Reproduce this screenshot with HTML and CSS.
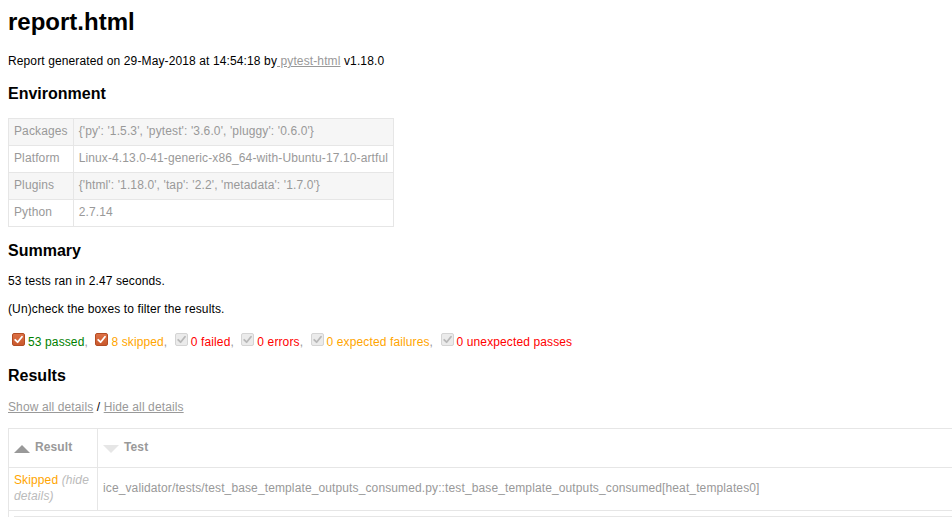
FILE: index.html
```html
<!DOCTYPE html>
<html>
<head>
<meta charset="utf-8">
<title>Test Report</title>
<link rel="stylesheet" href="styles.css">
</head>
<body>
<h1>report.html</h1>
<p>Report generated on 29-May-2018 at 14:54:18 by<a href="#"> pytest-html</a> v1.18.0</p>
<h2>Environment</h2>
<table id="environment">
  <tr><td>Packages</td><td>{'py': '1.5.3', 'pytest': '3.6.0', 'pluggy': '0.6.0'}</td></tr>
  <tr><td>Platform</td><td>Linux-4.13.0-41-generic-x86_64-with-Ubuntu-17.10-artful</td></tr>
  <tr><td>Plugins</td><td>{'html': '1.18.0', 'tap': '2.2', 'metadata': '1.7.0'}</td></tr>
  <tr><td>Python</td><td>2.7.14</td></tr>
</table>
<h2>Summary</h2>
<p>53 tests ran in 2.47 seconds. </p>
<p class="filter">(Un)check the boxes to filter the results.</p>
<div class="filters"><span class="cb on"><svg viewBox="0 0 13 13" width="13" height="13"><polyline points="3.2,6.8 5.6,9.2 10,3.8"/></svg></span><span class="passed">53 passed</span>, <span class="cb on"><svg viewBox="0 0 13 13" width="13" height="13"><polyline points="3.2,6.8 5.6,9.2 10,3.8"/></svg></span><span class="skipped">8 skipped</span>, <span class="cb off"><svg viewBox="0 0 13 13" width="13" height="13"><polyline points="3.2,6.8 5.6,9.2 10,3.8"/></svg></span><span class="failed">0 failed</span>, <span class="cb off"><svg viewBox="0 0 13 13" width="13" height="13"><polyline points="3.2,6.8 5.6,9.2 10,3.8"/></svg></span><span class="error">0 errors</span>, <span class="cb off"><svg viewBox="0 0 13 13" width="13" height="13"><polyline points="3.2,6.8 5.6,9.2 10,3.8"/></svg></span><span class="xfailed">0 expected failures</span>, <span class="cb off"><svg viewBox="0 0 13 13" width="13" height="13"><polyline points="3.2,6.8 5.6,9.2 10,3.8"/></svg></span><span class="xpassed">0 unexpected passes</span></div>
<h2>Results</h2>
<p class="filter details-links"><a href="#">Show all details</a> / <a href="#">Hide all details</a></p>
<table id="results-table">
  <thead>
    <tr>
      <th class="col-result asc active"><div class="sort-icon"></div>Result</th>
      <th class="col-name inactive"><div class="sort-icon"></div>Test</th>
      <th class="col-duration inactive"><div class="sort-icon"></div>Duration</th>
      <th class="col-links">Links</th>
    </tr>
  </thead>
  <tbody class="skipped">
    <tr>
      <td class="col-result">Skipped<span class="collapser"> (hide details)</span></td>
      <td class="col-name">ice_validator/tests/test_base_template_outputs_consumed.py::test_base_template_outputs_consumed[heat_templates0]</td>
      <td class="col-duration">0.00</td>
      <td class="col-links"></td>
    </tr>
    <tr>
      <td class="extra" colspan="4"><div class="log">('ice_validator/tests/test_base_template_outputs_consumed.py', 45, 'Skipped: No base template found')</div></td>
    </tr>
  </tbody>
</table>
</body>
</html>
```

FILE: styles.css
```css
html {
  overflow: hidden;
}

body {
  margin: 0;
  padding: 0 8px;
  font-family: "Liberation Sans", Arial, Helvetica, sans-serif;
  font-size: 12px;
  line-height: 1.33;
  letter-spacing: 0.12px;
  color: #999;
}

h1 {
  font-size: 24px;
  color: #000;
  margin: 6px 0 16px;
  letter-spacing: normal;
}

h2 {
  font-size: 16px;
  color: #000;
  margin: 13.3px 0;
  letter-spacing: normal;
}

p {
  color: #000;
  margin: 12px 0;
}

.details-links {
  margin: 14px 0 12px;
}

a {
  color: #999;
}

table {
  border-collapse: collapse;
}

#environment td {
  padding: 5px;
  border: 1px solid #e6e6e6;
}

#environment tr:nth-child(odd) {
  background-color: #f6f6f6;
}

.filters {
  margin: 0;
}

.cb {
  display: inline-block;
  box-sizing: border-box;
  width: 13px;
  height: 13px;
  margin: 3px 3px 0 4px;
  border-radius: 2px;
  vertical-align: baseline;
}

.cb svg {
  display: block;
  margin: -1px;
  fill: none;
  stroke-width: 1.8;
  stroke-linecap: round;
  stroke-linejoin: round;
}

.cb.on {
  background: linear-gradient(#dd7045, #c9592d);
  border: 1px solid #b34c24;
}

.cb.on svg {
  stroke: #fff;
}

.cb.off {
  background: #ebebeb;
  border: 1px solid #d4d4d4;
}

.cb.off svg {
  stroke: #b8b8b8;
}

span.passed, .passed .col-result {
  color: green;
}

span.skipped, span.xfailed, .skipped .col-result, .xfailed .col-result {
  color: orange;
}

span.error, span.failed, span.xpassed, .error .col-result, .failed .col-result, .xpassed .col-result {
  color: red;
}

#results-table {
  border: 1px solid #e6e6e6;
  color: #999;
  font-size: 12px;
  width: max-content;
  min-width: 100%;
}

#results-table th,
#results-table td {
  padding: 5px;
  border: 1px solid #e6e6e6;
  text-align: left;
}

#results-table th {
  font-weight: bold;
  padding: 11px 5px;
}

#results-table .col-result {
  width: 78px;
}

#results-table .col-name {
  width: 900px;
  white-space: nowrap;
}

#results-table .col-duration {
  width: 80px;
}

#results-table .col-links {
  width: 60px;
}

.collapser {
  color: #bbb;
  font-style: italic;
}

.log {
  background-color: #e6e6e6;
  border: 1px solid #e6e6e6;
  color: #000;
  font-family: "Liberation Mono", "Courier New", monospace;
  height: 230px;
  padding: 5px;
  white-space: pre-wrap;
}

.sort-icon {
  font-size: 0;
  float: left;
  margin-right: 5px;
  margin-top: 5px;
  width: 0;
  height: 0;
  border-left: 8px solid transparent;
  border-right: 8px solid transparent;
}

.inactive .sort-icon {
  border-top: 8px solid #e6e6e6;
}

.asc.active .sort-icon {
  border-bottom: 8px solid #999;
}
```
